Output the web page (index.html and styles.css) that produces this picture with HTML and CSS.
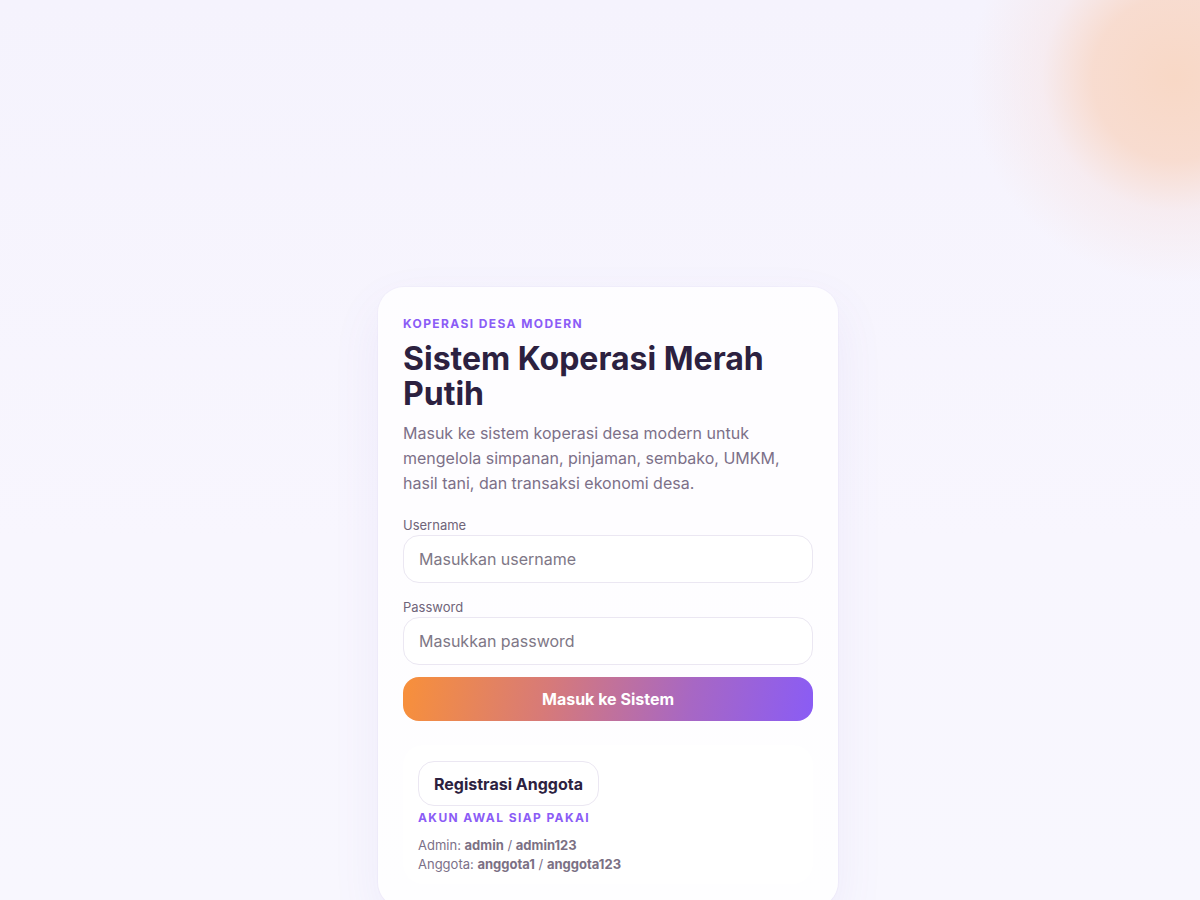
FILE: index.html
```html
<!DOCTYPE html>
<html lang="id">
<head>
<meta charset="utf-8">
<title>Sistem Koperasi Merah Putih</title>
<link rel="stylesheet" href="styles.css">
</head>
<body>
<main class="page">
  <section class="card">
    <div class="eyebrow">KOPERASI DESA MODERN</div>
    <h1 class="title">Sistem Koperasi Merah Putih</h1>
    <p class="lead">Masuk ke sistem koperasi desa modern untuk mengelola simpanan, pinjaman, sembako, UMKM, hasil tani, dan transaksi ekonomi desa.</p>
    <form class="form">
      <label class="field">
        <span class="label">Username</span>
        <input class="input" type="text" placeholder="Masukkan username">
      </label>
      <label class="field">
        <span class="label">Password</span>
        <input class="input" type="password" placeholder="Masukkan password">
      </label>
      <button class="submit" type="button">Masuk ke Sistem</button>
    </form>
    <div class="extra">
      <button class="register" type="button">Registrasi Anggota</button>
      <div class="eyebrow small">AKUN AWAL SIAP PAKAI</div>
      <div class="accounts">
        <div>Admin: <b>admin</b> / <b>admin123</b></div>
        <div>Anggota: <b>anggota1</b> / <b>anggota123</b></div>
      </div>
    </div>
  </section>
</main>
</body>
</html>
```
FILE: styles.css
```css
* { box-sizing: border-box; }
html, body { margin: 0; padding: 0; }
body {
  font-family: Inter, "Noto Sans", "Liberation Sans", sans-serif;
  background:
    radial-gradient(circle 205px at 1175px 78px, rgba(248, 216, 198, 1) 0%, rgba(248, 218, 204, 0.92) 40%, rgba(247, 228, 228, 0.5) 65%, rgba(246, 240, 252, 0) 100%),
    linear-gradient(180deg, #f5f3fd 0%, #f8f6fe 60%, #f8f7fe 100%);
  height: 900px;
  overflow: hidden;
  color: #2a1f3d;
}
.page {
  display: flex;
  justify-content: center;
  padding: 287px 0 0 16px;
}
.card {
  width: 460px;
  background: rgba(255, 255, 255, 0.8);
  border-radius: 26px;
  padding: 30px 25px 24px;
  box-shadow: 0 20px 50px rgba(120, 90, 200, 0.08), 0 0 0 1px rgba(240, 236, 250, 0.6);
}
.eyebrow {
  font-size: 12px;
  font-weight: 700;
  letter-spacing: 1.4px;
  color: #8b5cf6;
  line-height: 14px;
}
.title {
  margin: 10px 0 0;
  font-size: 32px;
  line-height: 35px;
  font-weight: 700;
  color: #2c2140;
}
.lead {
  margin: 10px 0 0;
  font-size: 16px;
  line-height: 25px;
  color: #7c7088;
}
.form {
  margin-top: 21px;
  display: flex;
  flex-direction: column;
}
.field {
  display: flex;
  flex-direction: column;
  margin-bottom: 16px;
}
.field:last-of-type { margin-bottom: 12px; }
.label {
  font-size: 13px;
  line-height: 16px;
  color: #6f6479;
  margin-bottom: 2px;
}
.input {
  height: 48px;
  border: 1px solid #ebe7f2;
  border-radius: 16px;
  background: #fff;
  padding: 0 15px;
  font-family: inherit;
  font-size: 16px;
  color: #2a1f3d;
  outline: none;
}
.input::placeholder { color: #7e7786; }
.submit {
  height: 44px;
  border: 0;
  border-radius: 16px;
  background: linear-gradient(100deg, #f8903a 0%, #d77a78 35%, #a767c4 70%, #8a5cf5 100%);
  color: #fff;
  font-family: inherit;
  font-size: 16px;
  font-weight: 700;
}
.extra {
  margin-top: 24px;
  background: rgba(255, 255, 255, 0.7);
  border-radius: 20px;
  padding: 16px 15px 10px;
  display: flex;
  flex-direction: column;
  align-items: flex-start;
}
.register {
  height: 45px;
  padding: 0 15px;
  border: 1px solid #ebe7f2;
  border-radius: 16px;
  background: #fff;
  font-family: inherit;
  font-size: 16px;
  font-weight: 700;
  color: #2c2140;
}
.eyebrow.small {
  margin-top: 5px;
  letter-spacing: 1.4px;
}
.accounts {
  margin-top: 11px;
  font-size: 13px;
  line-height: 19px;
  color: #7c7088;
}
.accounts b { color: #7b7084; font-weight: 700; }
```
